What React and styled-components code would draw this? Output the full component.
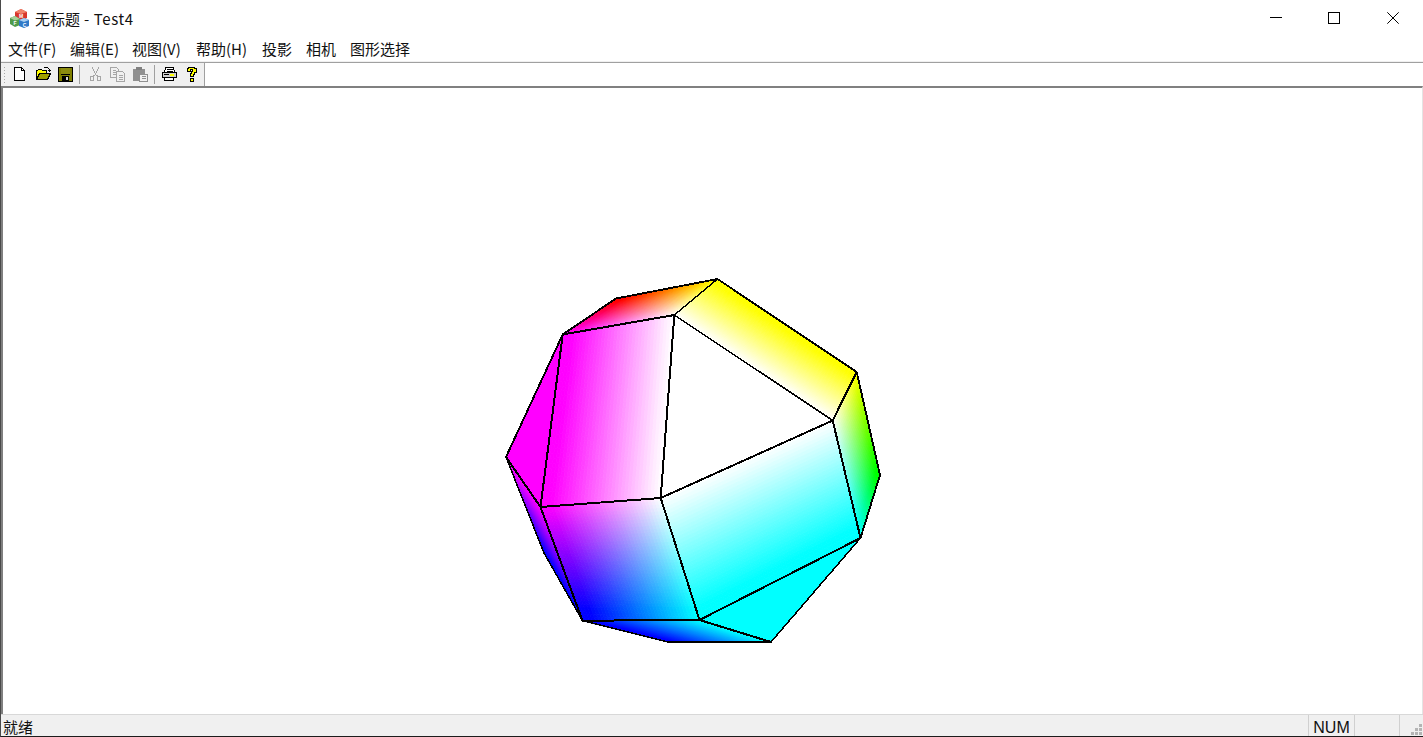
import React from 'react';
import styled, { createGlobalStyle } from 'styled-components';

const GlobalStyle = createGlobalStyle`
  html, body { margin: 0; padding: 0; background: #fff; overflow: hidden; }
  body { font-family: "Noto Sans CJK SC", "Liberation Sans", sans-serif; }
`;

const LOW = -25;
const W = [255, 255, 255];
const Mg = [255, LOW, 255];
const Rd = [255, LOW, LOW];
const Yl = [255, 255, LOW];
const Gn = [LOW, 255, LOW];
const Cy = [LOW, 255, 255];
const Bl = [LOW, LOW, 255];

const A = [717.5, 279], B = [616, 298.5], C = [562.7, 334.5], D = [674.3, 315];
const E = [856.7, 372], F = [832.7, 420.5], G = [880, 475], H = [860.5, 538];
const I = [660.7, 498], J = [540.5, 507], K = [506, 457], L = [582.5, 620.7];
const M = [699.5, 620], N = [771, 642], O = [668, 642], P = [544, 553];

// quad faces as [p0,p1,p2,p3] with a colour per corner, shaded like GL smooth quads
const FACES = [
  [[K, C, J, J], [Mg, Mg, Mg, Mg]],
  [[K, J, L, P], [Mg, Mg, Bl, Bl]],
  [[L, M, N, O], [Bl, Cy, Cy, Bl]],
  [[M, H, N, N], [Cy, Cy, Cy, Cy]],
  [[C, B, A, D], [Mg, Rd, Yl, W]],
  [[D, A, E, F], [W, Yl, Yl, W]],
  [[D, F, I, I], [W, W, W, W]],
  [[J, C, D, I], [Mg, Mg, W, W]],
  [[F, E, G, H], [W, Yl, Gn, Cy]],
  [[I, F, H, M], [W, W, Cy, Cy]],
  [[J, I, M, L], [Mg, W, Cy, Bl]],
];

const EDGES = [
  [[K, C, B, A, E, G, H], 1.9],
  [[H, N, O, L, P, K], 1.5],
  [[D, F], 1.5],
  [[C, D], 2],
  [[A, D], 1.5],
  [[D, I, J, C], 2],
  [[E, F, H, M, I, F], 2],
  [[J, L, M, N], 2],
  [[K, J], 2],
  [[M, H], 1.7],
];

const lerp = (a, b, t) => a.map((v, i) => v + (b[i] - v) * t);
const bilinear = (q, u, v) => lerp(lerp(q[0], q[1], u), lerp(q[3], q[2], u), v);
const clampRgb = c => `rgb(${c.map(x => Math.round(Math.max(0, Math.min(255, x)))).join(',')})`;

const buildCells = () => {
  const n = 36;
  const cells = [];
  FACES.forEach(([pts, cols]) => {
    const flat = cols.every(c => c === cols[0]);
    const steps = flat ? 1 : n;
    for (let i = 0; i < steps; i++) {
      for (let j = 0; j < steps; j++) {
        const u0 = i / steps, u1 = (i + 1) / steps, v0 = j / steps, v1 = (j + 1) / steps;
        const poly = [[u0, v0], [u1, v0], [u1, v1], [u0, v1]]
          .map(([u, v]) => bilinear(pts, u, v).map(x => x.toFixed(1)).join(','))
          .join(' ');
        cells.push({ poly, fill: clampRgb(bilinear(cols, (u0 + u1) / 2, (v0 + v1) / 2)) });
      }
    }
  });
  return cells;
};

const CELLS = buildCells();

const Solid = () => (
  <svg width="1420" height="626" viewBox="3 88 1420 626" style={{ display: 'block' }}>
    {CELLS.map((c, i) => (
      <polygon key={i} points={c.poly} fill={c.fill} stroke={c.fill} strokeWidth="0.8" />
    ))}
    <g shapeRendering="crispEdges">
      {EDGES.map(([pts, w], i) => (
        <polyline key={i} points={pts.map(p => p.join(',')).join(' ')} fill="none" stroke="#000" strokeWidth={w} strokeLinejoin="round" />
      ))}
    </g>
  </svg>
);

const Icon = ({ children }) => (
  <svg width="16" height="16" viewBox="0 0 16 16" shapeRendering="crispEdges">{children}</svg>
);

const NewIcon = () => (
  <Icon>
    <path d="M2.5 1.5H9.5L12.5 4.5V14.5H2.5Z" fill="#fff" stroke="#000" />
    <path d="M9.5 1.5V4.5H12.5" fill="none" stroke="#000" />
  </Icon>
);

const OpenIcon = () => (
  <Icon>
    <path d="M1.5 13.5V4.5H2.5L3.5 3.5H6.5L7.5 4.5H11.5V6.5" fill="#ffff00" stroke="#000" />
    <path d="M1.5 13.5L4.5 7.5H15.5L12.5 13.5Z" fill="#a0a000" stroke="#000" />
    <path d="M8.5 2.5L9.5 1.5H12.5L14.5 3.5V5.5M12.5 4.5H15.5" fill="none" stroke="#000" />
  </Icon>
);

const SaveIcon = () => (
  <Icon>
    <path d="M0 1H15V16H0Z" fill="#000" />
    <path d="M1 2H14V15H1Z" fill="#808000" />
    <path d="M3 2H12V8H3Z" fill="#8c8c10" />
    <path d="M3 8H12V9H3Z" fill="#000" />
    <path d="M4 10H11V15H4Z" fill="#000" />
    <path d="M8 11H10V14H8Z" fill="#d8d8d8" />
  </Icon>
);

const CutIcon = () => (
  <Icon>
    <g fill="none" stroke="#a6a6a6">
      <path d="M5.5 1.5L8.5 8.5M11.5 1.5L8.5 8.5M8.5 8.5L5.5 10.5M8.5 8.5L11.5 10.5" />
      <path d="M3.5 10.5H6.5V14.5H3.5ZM10.5 10.5H13.5V14.5H10.5Z" />
    </g>
  </Icon>
);

const CopyIcon = () => (
  <Icon>
    <g fill="#f0f0f0" stroke="#a6a6a6">
      <path d="M0.5 1.5H6.5L8.5 3.5V11.5H0.5Z" />
      <path d="M6.5 5.5H12.5L14.5 7.5V15.5H6.5Z" />
      <path d="M2.5 4.5H5.5M2.5 6.5H5.5M2.5 8.5H5.5M8.5 9.5H12.5M8.5 11.5H12.5M8.5 13.5H12.5" fill="none" />
    </g>
  </Icon>
);

const PasteIcon = () => (
  <Icon>
    <path d="M0 3H12V15H0Z" fill="#909090" />
    <path d="M3 1H9V4H3Z" fill="#808080" />
    <path d="M6.5 8.5H14.5V15.5H6.5Z" fill="#f0f0f0" stroke="#909090" />
    <path d="M8.5 10.5H12.5M8.5 12.5H12.5" fill="none" stroke="#909090" />
  </Icon>
);

const PrintIcon = () => (
  <Icon>
    <g transform="translate(-1 0)">
      <path d="M4.5 1.5H12.5L13.5 6.5H3.5Z" fill="#fff" stroke="#000" />
      <path d="M5.5 3.5H11.5M5.5 5.5H11.5" fill="none" stroke="#000" />
      <path d="M1.5 6.5H15.5V11.5H1.5Z" fill="#d0d0d0" stroke="#000" />
      <path d="M3 8H8V9H3Z" fill="#000" />
      <path d="M9 8H13V10H9Z" fill="#ffff00" />
      <path d="M3.5 11.5H12.5V14.5H3.5Z" fill="#fff" stroke="#000" />
    </g>
  </Icon>
);

const HelpIcon = () => (
  <Icon>
    <g transform="translate(-1 0)">
      <path d="M4.5 1.5H10.5V2.5H12.5V6.5H10.5V8.5H9.5V10.5H6.5V7.5H7.5V5.5H8.5V3.5H6.5V5.5H3.5V2.5H4.5Z" fill="#ffff00" stroke="#000" />
      <path d="M6.5 12.5H9.5V15.5H6.5Z" fill="#ffff00" stroke="#000" />
    </g>
  </Icon>
);

const AppLogo = () => (
  <svg width="20" height="20" viewBox="0 -1 20 20" fontFamily="Liberation Sans, sans-serif" fontWeight="700" fontSize="5" textAnchor="middle">
    <polygon points="5,3 11,0 17,3 17,9 11,12 5,9" fill="#d8362c" />
    <polygon points="5,3 11,0 17,3 11,5" fill="#f0836a" />
    <polygon points="0,9 5,7 10,10 10,16 5,18 0,15" fill="#4f9a4a" />
    <polygon points="0,9 5,7 10,10 5,11.5" fill="#a8d09a" />
    <polygon points="9,11 14,9 19,11 19,17 14,19 9,17" fill="#2f79c8" />
    <polygon points="9,11 14,9 19,11 14,13" fill="#a6cdf0" />
    <text x="11" y="9" fill="#fff">M</text>
    <text x="5" y="16" fill="#fff">F</text>
    <text x="14.5" y="18" fill="#fff">C</text>
  </svg>
);

const Shell = styled.div`
  width: 1423px;
  height: 737px;
  box-sizing: border-box;
  display: flex;
  flex-direction: column;
  border-left: 1px solid #4a4a4a;
  border-bottom: 1px solid #1c1c1c;
  background: #fff;
  color: #000;
  overflow: hidden;
`;

const TitleBar = styled.header`
  height: 36px;
  flex: none;
  display: flex;
  align-items: center;
  padding: 0 1px 0 9px;
  box-sizing: border-box;
`;

const TitleText = styled.span`
  margin-left: 5px;
  font-size: 15px;
  flex: 1;
  color: #111;
`;

const TitleLatin = styled.span`
  letter-spacing: 0.6px;
`;

const WinButton = styled.div`
  width: 58.5px;
  height: 36px;
  display: flex;
  align-items: center;
  justify-content: center;
  svg { display: block; }
`;

const MenuBar = styled.nav`
  height: 27px;
  flex: none;
  box-sizing: border-box;
  display: flex;
  align-items: flex-start;
  border-bottom: 1px solid #a0a0a0;
  box-shadow: inset 0 -1px 0 #f0f0f0;
`;

const MenuItem = styled.span`
  width: ${p => p.$w}px;
  padding-left: 7px;
  box-sizing: border-box;
  white-space: nowrap;
  font-size: 15px;
  line-height: 26px;
  color: #111;
`;

const ToolRow = styled.div`
  height: 23px;
  flex: none;
  display: flex;
  box-sizing: border-box;
`;

const Toolbar = styled.div`
  width: 204px;
  box-sizing: border-box;
  display: flex;
  background: #f0f0f0;
  border-right: 1px solid #a0a0a0;
`;

const Grip = styled.div`
  width: 7px;
  flex: none;
  margin: 3px 0;
  background-image: radial-gradient(#a8a8a8 1px, transparent 1px);
  background-size: 3px 3px;
  background-position: 2px 0;
  background-repeat: repeat-y;
`;

const ToolButton = styled.div`
  width: 23px;
  height: 23px;
  flex: none;
  display: flex;
  justify-content: center;
  padding-top: 3px;
  box-sizing: border-box;
  svg { display: block; }
`;

const ToolSep = styled.div`
  width: 6px;
  flex: none;
  display: flex;
  padding: 2px 0 2px 2px;
  box-sizing: border-box;
  &::before { content: ""; width: 1px; background: #a0a0a0; }
`;

const Canvas = styled.main`
  flex: 1;
  min-height: 0;
  box-sizing: border-box;
  border-top: 2px solid #808080;
  border-left: 2px solid #808080;
  border-right: 1px solid #e4e4e4;
  overflow: hidden;
`;

const StatusBar = styled.footer`
  height: 22px;
  flex: none;
  box-sizing: border-box;
  display: flex;
  background: #f0f0f0;
  border-top: 1px solid #d8d8d8;
  font-size: 15px;
  color: #111;
  position: relative;
`;

const StatusText = styled.div`
  flex: 1;
  padding-left: 2px;
  line-height: 23px;
`;

const Pane = styled.div`
  width: ${p => p.$w}px;
  box-sizing: border-box;
  border-left: 1px solid #d0d0d0;
  text-align: center;
  font-family: "Liberation Sans", sans-serif;
  font-size: 16px;
  line-height: 25px;
`;

const Gripper = styled.svg`
  position: absolute;
  right: 0;
  bottom: 0;
`;

const MENUS = [
  ['文件(F)', 62],
  ['编辑(E)', 62],
  ['视图(V)', 64],
  ['帮助(H)', 66],
  ['投影', 44],
  ['相机', 44],
  ['图形选择', 80],
];

export default function App() {
  return (
    <>
      <GlobalStyle />
      <Shell>
        <TitleBar>
          <AppLogo />
          <TitleText>无标题<TitleLatin> - Test4</TitleLatin></TitleText>
          <WinButton>
            <svg width="12" height="12" viewBox="0 0 12 12" shapeRendering="crispEdges"><path d="M0 5.5H12" stroke="#000" /></svg>
          </WinButton>
          <WinButton>
            <svg width="12" height="12" viewBox="0 0 12 12" shapeRendering="crispEdges"><path d="M.5.5H11.5V11.5H.5Z" fill="none" stroke="#000" /></svg>
          </WinButton>
          <WinButton>
            <svg width="12" height="12" viewBox="0 0 12 12"><path d="M.3.3L11.7 11.7M11.7.3L.3 11.7" fill="none" stroke="#000" strokeWidth="1" /></svg>
          </WinButton>
        </TitleBar>
        <MenuBar>
          {MENUS.map(([label, w]) => <MenuItem key={label} $w={w}>{label}</MenuItem>)}
        </MenuBar>
        <ToolRow>
          <Toolbar>
            <Grip />
            <ToolButton><NewIcon /></ToolButton>
            <ToolButton><OpenIcon /></ToolButton>
            <ToolButton><SaveIcon /></ToolButton>
            <ToolSep />
            <ToolButton><CutIcon /></ToolButton>
            <ToolButton><CopyIcon /></ToolButton>
            <ToolButton><PasteIcon /></ToolButton>
            <ToolSep />
            <ToolButton><PrintIcon /></ToolButton>
            <ToolButton><HelpIcon /></ToolButton>
          </Toolbar>
        </ToolRow>
        <Canvas>
          <Solid />
        </Canvas>
        <StatusBar>
          <StatusText>就绪</StatusText>
          <Pane $w={46}>NUM</Pane>
          <Pane $w={45} />
          <Pane $w={24} />
          <Gripper width="12" height="12" viewBox="0 0 12 12" fill="#b4b4b4" shapeRendering="crispEdges">
            <path d="M8 0h3v3H8zM4 4h3v3H4zM8 4h3v3H8zM0 8h3v3H0zM4 8h3v3H4zM8 8h3v3H8z" />
          </Gripper>
        </StatusBar>
      </Shell>
    </>
  );
}
